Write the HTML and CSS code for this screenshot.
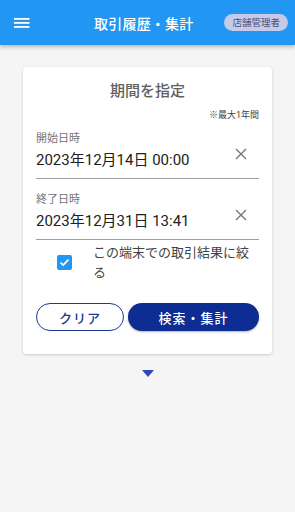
FILE: index.html
```html
<!DOCTYPE html>
<html lang="ja">
<head>
    <meta charset="UTF-8">
    <meta name="viewport" content="width=device-width, initial-scale=1.0">
    <title>取引履歴・集計</title>
    <link rel="stylesheet" href="styles.css">
</head>
<body>
    <header class="app-bar">
        <button class="menu-btn" aria-label="メニュー">
            <svg width="16" height="12" viewBox="0 0 16 12">
                <rect x="0" y="1" width="15.5" height="1.8" fill="#fff"/>
                <rect x="0" y="5" width="15.5" height="1.8" fill="#fff"/>
                <rect x="0" y="9" width="15.5" height="1.8" fill="#fff"/>
            </svg>
        </button>
        <h1 class="app-title">取引履歴・集計</h1>
        <span class="role-badge">店舗管理者</span>
    </header>

    <main class="content">
        <section class="card">
            <h2 class="card-title">期間を指定</h2>
            <p class="note">※最大1年間</p>

            <div class="field">
                <label class="field-label">開始日時</label>
                <div class="field-row">
                    <span class="field-value">2023年12月14日 00:00</span>
                    <button class="clear-btn" aria-label="クリア">
                        <svg width="12" height="12" viewBox="0 0 12 12">
                            <path d="M1 1 L11 11 M11 1 L1 11" stroke="#757575" stroke-width="1.4"/>
                        </svg>
                    </button>
                </div>
            </div>

            <div class="field">
                <label class="field-label">終了日時</label>
                <div class="field-row">
                    <span class="field-value">2023年12月31日 13:41</span>
                    <button class="clear-btn" aria-label="クリア">
                        <svg width="12" height="12" viewBox="0 0 12 12">
                            <path d="M1 1 L11 11 M11 1 L1 11" stroke="#757575" stroke-width="1.4"/>
                        </svg>
                    </button>
                </div>
            </div>

            <div class="check-row">
                <span class="checkbox">
                    <svg width="15" height="15" viewBox="0 0 15 15">
                        <rect width="15" height="15" rx="2" fill="#2196f3"/>
                        <path d="M3.5 7.6 L6.2 10.1 L11.5 4.7" stroke="#fff" stroke-width="1.8" fill="none"/>
                    </svg>
                </span>
                <span class="check-text">この端末での取引結果に絞る</span>
            </div>

            <div class="actions">
                <button class="btn btn-outline">クリア</button>
                <button class="btn btn-primary">検索・集計</button>
            </div>
        </section>

        <div class="arrow-down"></div>
    </main>
</body>
</html>
```

FILE: styles.css
```css
* {
    box-sizing: border-box;
}
body {
    margin: 0;
    background-color: #f5f5f5;
    font-family: Roboto, "Noto Sans CJK JP", sans-serif;
    color: #212121;
}
.app-bar {
    height: 45px;
    background-color: #2196f3;
    display: flex;
    align-items: center;
    padding: 0 7px 0 14px;
    box-shadow: 0 2px 4px rgba(0, 0, 0, 0.25);
}
.menu-btn {
    background: none;
    border: none;
    padding: 0;
    width: 16px;
    height: 12px;
    display: flex;
}
.app-title {
    flex: 1;
    margin: 0;
    text-align: center;
    color: #fff;
    font-size: 14px;
    font-weight: 500;
    padding-left: 33px;
    letter-spacing: 0.2px;
}
.role-badge {
    background-color: #c5cae9;
    color: #46527a;
    font-size: 9.5px;
    border-radius: 9px;
    height: 17px;
    line-height: 17px;
    padding: 0 8px;
}
.content {
    padding: 22px 23px;
}
.card {
    background-color: #fff;
    border-radius: 4px;
    box-shadow: 0 1px 3px rgba(0, 0, 0, 0.18);
    padding: 13px 13px 23px;
}
.card-title {
    margin: 0;
    text-align: center;
    font-size: 15px;
    font-weight: 500;
    color: #616161;
    line-height: 22px;
}
.note {
    margin: 6px 0 -4px;
    text-align: right;
    font-size: 9px;
    color: #424242;
    line-height: 14px;
}
.field {
    border-bottom: 1px solid #9e9e9e;
    padding: 13px 0 7px;
}
.field-label {
    display: block;
    font-size: 11px;
    color: #757575;
    line-height: 16px;
}
.field-row {
    display: flex;
    align-items: flex-start;
    justify-content: space-between;
    margin-top: 2px;
}
.field-value {
    font-size: 15px;
    line-height: 22px;
    color: #212121;
}
.clear-btn {
    background: none;
    border: none;
    padding: 0;
    margin: -1px 12px 0 0;
    display: flex;
}
.check-row {
    display: flex;
    align-items: center;
    padding: 3px 8px 0 21px;
}
.checkbox {
    display: flex;
    margin-right: 21px;
}
.check-text {
    font-size: 13px;
    line-height: 19.5px;
    color: #424242;
}
.actions {
    display: flex;
    gap: 4px;
    margin-top: 21px;
}
.btn {
    height: 28px;
    border-radius: 14px;
    font-family: Roboto, "Noto Sans CJK JP", sans-serif;
    font-size: 13px;
    font-weight: 500;
    letter-spacing: 1px;
}
.btn-outline {
    width: 88px;
    background-color: #fff;
    border: 1px solid #1a3a8f;
    color: #1a3a8f;
}
.btn-primary {
    flex: 1;
    background-color: #0d2d92;
    border: none;
    color: #fff;
    box-shadow: 0 1px 2px rgba(0, 0, 0, 0.3);
}
.arrow-down {
    width: 0;
    height: 0;
    margin: 16px auto 0;
    border-left: 6px solid transparent;
    border-right: 6px solid transparent;
    border-top: 7px solid #3346b8;
}
```
